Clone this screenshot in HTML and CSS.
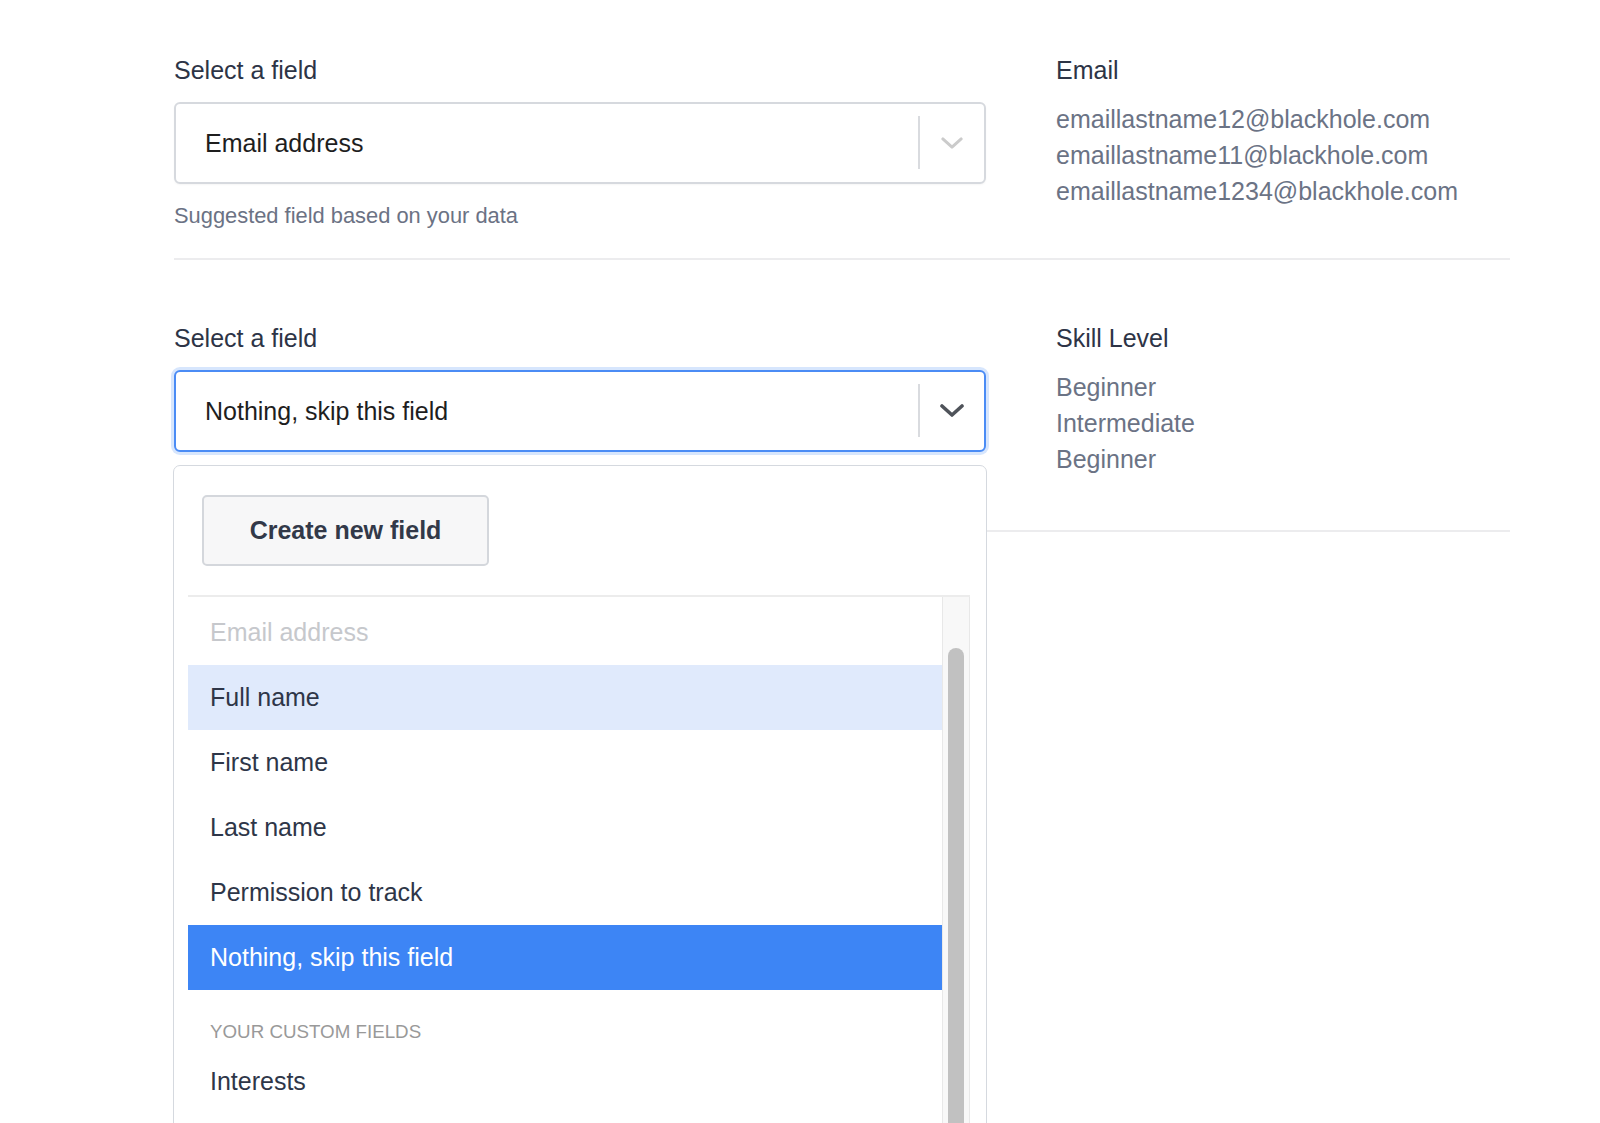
FILE: index.html
```html
<!DOCTYPE html>
<html lang="en">
<head>
<meta charset="utf-8">
<title>Map fields</title>
<link rel="stylesheet" href="styles.css">
</head>
<body>
<main class="page">
  <section class="row row-first">
    <div class="col-left">
      <div class="field-label">Select a field</div>
      <div class="select">
        <div class="select-value">Email address</div>
        <span class="select-sep"></span>
        <span class="select-arrow">
          <svg width="22" height="13" viewBox="0 0 24 14"><polyline points="2,2 12,11 22,2" fill="none" stroke="currentColor" stroke-width="3.2" stroke-linecap="round" stroke-linejoin="round"/></svg>
        </span>
      </div>
      <div class="helper">Suggested field based on your data</div>
    </div>
    <div class="col-right">
      <div class="col-title">Email</div>
      <ul class="samples">
        <li>emaillastname12@blackhole.com</li>
        <li>emaillastname11@blackhole.com</li>
        <li>emaillastname1234@blackhole.com</li>
      </ul>
    </div>
  </section>

  <section class="row row-second">
    <div class="col-left">
      <div class="field-label">Select a field</div>
      <div class="select-wrap">
        <div class="select select-focused">
          <div class="select-value">Nothing, skip this field</div>
          <span class="select-sep"></span>
          <span class="select-arrow">
            <svg width="24" height="14" viewBox="0 0 24 14"><polyline points="2,2 12,11 22,2" fill="none" stroke="currentColor" stroke-width="3.6" stroke-linecap="round" stroke-linejoin="round"/></svg>
          </span>
        </div>
        <div class="menu">
          <div class="menu-actions">
            <button class="btn-create" type="button">Create new field</button>
          </div>
          <div class="menu-list">
            <ul class="options">
              <li class="option option-disabled">Email address</li>
              <li class="option option-hover">Full name</li>
              <li class="option">First name</li>
              <li class="option">Last name</li>
              <li class="option">Permission to track</li>
              <li class="option option-selected">Nothing, skip this field</li>
              <li class="group-header">YOUR CUSTOM FIELDS</li>
              <li class="option">Interests</li>
            </ul>
            <div class="scroll-track"><div class="scroll-thumb"></div></div>
          </div>
        </div>
      </div>
    </div>
    <div class="col-right">
      <div class="col-title">Skill Level</div>
      <ul class="samples">
        <li>Beginner</li>
        <li>Intermediate</li>
        <li>Beginner</li>
      </ul>
    </div>
  </section>
</main>
</body>
</html>
```

FILE: styles.css
```css
html, body {
  margin: 0;
  padding: 0;
  height: 1123px;
  overflow: hidden;
  background: #ffffff;
}

body {
  font-family: "Liberation Sans", Arial, Helvetica, sans-serif;
  font-size: 25px;
  color: #2d3446;
}

.page {
  width: 1336px;
  margin-left: 174px;
}

.row {
  display: grid;
  grid-template-columns: 812px 1fr;
  column-gap: 70px;
  border-bottom: 2px solid #ececee;
}

.row-first {
  padding: 52px 0 27px;
}

.row-second {
  padding: 60px 0 53px;
}

.field-label,
.col-title {
  line-height: 36px;
  color: #2d3446;
}

.field-label {
  margin-bottom: 14px;
}

.select-wrap {
  position: relative;
}

.select {
  box-sizing: border-box;
  height: 82px;
  display: flex;
  align-items: center;
  border: 2px solid #d6d9de;
  border-radius: 6px;
  background: #fff;
  box-shadow: 0 1px 2px rgba(0, 0, 0, 0.04);
}

.select-value {
  flex: 1;
  padding-left: 29px;
  color: #1e1e1e;
}

.select-sep {
  align-self: stretch;
  width: 2px;
  margin: 12px 0 13px;
  background: #d9dbdf;
}

.select-arrow {
  width: 64px;
  display: flex;
  align-items: center;
  justify-content: center;
  color: #cbcbcb;
}

.select-focused {
  border-color: #4b8cf5;
  box-shadow: 0 0 0 3px rgba(75, 140, 245, 0.22);
}

.select-focused .select-arrow {
  color: #4f535a;
}

.helper {
  margin-top: 17px;
  line-height: 30px;
  font-size: 21.875px;
  color: #6b7284;
}

.samples {
  list-style: none;
  margin: 13px 0 0;
  padding: 0;
}

.samples li {
  line-height: 36px;
  color: #6b7385;
}

/* dropdown menu */
.menu {
  position: absolute;
  z-index: 5;
  left: -1px;
  right: -1px;
  top: calc(100% + 13px);
  height: 700px;
  box-sizing: border-box;
  background: #fff;
  border: 1.5px solid #d5d9df;
  border-radius: 7px;
  padding: 29px 16px 0 14px;
  overflow: hidden;
}

.menu-actions {
  padding-left: 14px;
  margin-bottom: 29px;
}

.btn-create {
  box-sizing: border-box;
  width: 287px;
  height: 71px;
  font-family: inherit;
  font-size: 25px;
  font-weight: bold;
  color: #323949;
  background: #f7f7f8;
  border: 2px solid #d4d7dc;
  border-radius: 5px;
}

.menu-list {
  display: flex;
  border-top: 2px solid #ececec;
  height: 640px;
}

.options {
  flex: 1;
  list-style: none;
  margin: 0;
  padding: 3px 0 0;
}

.option {
  height: 65px;
  display: flex;
  align-items: center;
  padding-left: 22px;
  color: #2e3648;
}

.option-disabled {
  color: #c6c8cc;
}

.option-hover {
  background: #e0eafc;
}

.option-selected {
  background: #3d85f5;
  color: #ffffff;
}

.group-header {
  padding: 30px 22px 5px;
  line-height: 24px;
  font-size: 18.75px;
  color: #999999;
}

.scroll-track {
  width: 26px;
  background: #f8f8f8;
  border-left: 1px solid #e8e8e8;
  border-right: 1px solid #e8e8e8;
}

.scroll-thumb {
  width: 16px;
  height: 560px;
  margin: 51px 0 0 5px;
  border-radius: 8px;
  background: #c1c1c1;
}
```
